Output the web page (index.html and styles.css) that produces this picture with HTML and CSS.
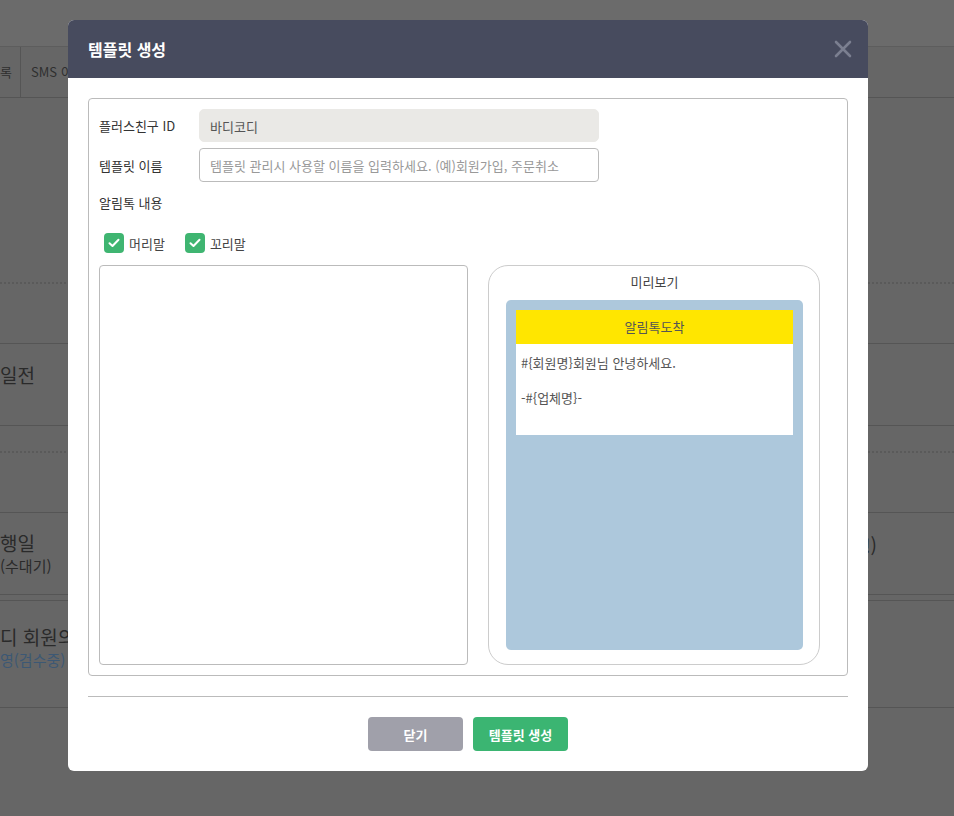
FILE: index.html
```html
<!DOCTYPE html>
<html lang="ko">
<head>
    <meta charset="UTF-8">
    <meta name="viewport" content="width=device-width, initial-scale=1.0">
    <title>알림톡 템플릿</title>
    <link rel="stylesheet" href="styles.css">
</head>
<body>
    <!-- page behind the dialog -->
    <div class="page">
        <div class="topbar"></div>
        <div class="tabs">
            <div class="tab tab-cut">록</div>
            <div class="tab">SMS 이력</div>
        </div>
        <div class="row row-empty dashed"></div>
        <div class="row row-gap"></div>
        <div class="row row-item row-top">
            <div class="cell-title">일전</div>
        </div>
        <div class="row row-thin dashed"></div>
        <div class="row row-gap"></div>
        <div class="row row-item">
            <div class="cell-title">행일<span class="sub">(수대기)</span></div>
            <div class="cell-right">!)</div>
        </div>
        <div class="row row-line"></div>
        <div class="row row-item row-tall">
            <div class="cell-title cell-wide">디 회원의<span class="sub blue">영(검수중)</span></div>
        </div>
    </div>

    <div class="dim">
        <div class="modal">
            <div class="modal-head">
                <h2>템플릿 생성</h2>
                <span class="close"><svg width="18" height="18" viewBox="0 0 18 18"><path d="M2 2 16 16M16 2 2 16" stroke="#7b7f90" stroke-width="2.6" stroke-linecap="round"/></svg></span>
            </div>
            <div class="modal-body">
                <div class="box">
                    <div class="field">
                        <label>플러스친구 ID</label>
                        <div class="input readonly">바디코디</div>
                    </div>
                    <div class="field">
                        <label>템플릿 이름</label>
                        <input class="input" type="text" placeholder="템플릿 관리시 사용할 이름을 입력하세요. (예)회원가입, 주문취소">
                    </div>
                    <div class="field field-text">
                        <label>알림톡 내용</label>
                    </div>
                    <div class="checks">
                        <span class="check">
                            <span class="tick"><svg width="12" height="10" viewBox="0 0 12 10"><path d="M1.5 5.2 4.5 8 10.5 1.8" fill="none" stroke="#fff" stroke-width="2" stroke-linecap="round" stroke-linejoin="round"/></svg></span>머리말
                        </span>
                        <span class="check">
                            <span class="tick"><svg width="12" height="10" viewBox="0 0 12 10"><path d="M1.5 5.2 4.5 8 10.5 1.8" fill="none" stroke="#fff" stroke-width="2" stroke-linecap="round" stroke-linejoin="round"/></svg></span>꼬리말
                        </span>
                    </div>
                    <div class="editor">
                        <textarea class="content"></textarea>
                        <div class="preview">
                            <div class="preview-title">미리보기</div>
                            <div class="phone">
                                <div class="bubble">
                                    <div class="bubble-head">알림톡도착</div>
                                    <div class="bubble-text">#{회원명}회원님 안녕하세요.<br><br>-#{업체명}-</div>
                                </div>
                            </div>
                        </div>
                    </div>
                </div>
                <div class="modal-foot">
                    <button class="btn btn-gray">닫기</button>
                    <button class="btn btn-green">템플릿 생성</button>
                </div>
            </div>
        </div>
    </div>
</body>
</html>
```

FILE: styles.css
```css
html, body{
    margin: 0;
    height: 100%;
    overflow: hidden;
}
body{
    font-family: "Noto Sans CJK KR", "Noto Sans", sans-serif;
    font-size: 13px;
    color: #333;
    background: #666;
}

/* page under the overlay (already dimmed colours) */
.page{
    color: #2a2a2a;
}
.topbar{
    height: 46px;
    background: #6b6b6b;
    border-bottom: 1px solid #5d5d5d;
}
.tabs{
    display: flex;
    height: 50px;
    border-bottom: 1px solid #555;
}
.tab{
    padding: 0 10px;
    line-height: 50px;
    font-size: 13px;
    border-right: 1px solid #555;
    color: #2f2f2f;
}
.tab-cut{
    padding: 0 8px 0 0;
}
.row{
    display: flex;
    border-bottom: 1px solid #555;
}
.row.dashed{
    border-bottom: 2px dotted #5a5a5a;
}
.row-empty{ height: 184px; }
.row-gap{ height: 59px; }
.row-thin{ height: 25px; }
.row-item{
    height: 81px;
    align-items: center;
    justify-content: space-between;
}
.row-top{ align-items: flex-start; }
.row-top .cell-title{ margin-top: 19px; }
.row-line{ height: 5px; }
.row-tall{ height: 106px; align-items: flex-start; }
.cell-title{
    font-size: 19px;
    line-height: 24px;
    display: flex;
    flex-direction: column;
}
.row-tall .cell-title{ margin-top: 24px; }
.sub{
    font-size: 15px;
    line-height: 22px;
}
.blue{ color: #3c5874; }
.cell-right{
    font-size: 19px;
    align-self: flex-start;
    margin: 18px 77px 0 0;
}

/* dialog */
.dim{
    position: fixed;
    inset: 0;
    padding: 20px 0 0 68px;
}
.modal{
    width: 800px;
    background: #fff;
    border-radius: 6px;
    overflow: hidden;
}
.modal-head{
    height: 58px;
    background: #474b5e;
    display: flex;
    align-items: center;
    justify-content: space-between;
    padding: 0 16px 0 20px;
}
.modal-head h2{
    margin: 0;
    font-size: 16px;
    font-weight: bold;
    color: #fff;
}
.close{
    display: flex;
    width: 18px;
    height: 18px;
}
.modal-body{
    padding: 20px;
}
.box{
    border: 1px solid #bbb;
    border-radius: 4px;
    padding: 10px 10px 10px 10px;
}
.field{
    display: flex;
    align-items: center;
    margin-bottom: 6px;
}
.field label{
    width: 100px;
    color: #333;
}
.input{
    box-sizing: border-box;
    width: 400px;
    height: 34px;
    padding: 0 10px;
    border: 1px solid #bbb;
    border-radius: 4px;
    font: inherit;
    color: #555;
    outline: none;
}
.input::placeholder{ color: #999; }
.readonly{
    height: 33px;
    line-height: 33px;
    background: #eae9e6;
    border-color: #eae9e6;
    border-radius: 5px;
}
.field-text{ height: 28px; }
.checks{
    display: flex;
    gap: 20px;
    margin: 17px 0 12px 5px;
}
.check{
    display: flex;
    align-items: center;
    gap: 5px;
    color: #444;
    height: 20px;
}
.tick{
    width: 20px;
    height: 20px;
    border-radius: 4px;
    background: #3fb571;
    display: flex;
    align-items: center;
    justify-content: center;
}
.editor{
    display: flex;
    gap: 20px;
}
.content{
    box-sizing: border-box;
    width: 369px;
    height: 400px;
    border: 1px solid #bbb;
    border-radius: 4px;
    resize: none;
    margin: 0;
}
.preview{
    box-sizing: border-box;
    width: 332px;
    height: 400px;
    border: 1px solid #ccc;
    border-radius: 20px;
    padding: 0 16px 14px 17px;
    display: flex;
    flex-direction: column;
}
.preview-title{
    text-align: center;
    line-height: 18px;
    padding: 7px 0 9px;
    color: #444;
}
.phone{
    flex: 1;
    background: #adc8dc;
    border-radius: 5px;
    padding: 10px;
}
.bubble{
    background: #fff;
}
.bubble-head{
    height: 34px;
    line-height: 34px;
    background: #ffe600;
    text-align: center;
    color: #555;
}
.bubble-text{
    height: 91px;
    box-sizing: border-box;
    padding: 10px 5px 0;
    line-height: 17.5px;
    color: #555;
}
.modal-foot{
    margin-top: 20px;
    border-top: 1px solid #bbb;
    padding-top: 20px;
    display: flex;
    justify-content: center;
    gap: 10px;
}
.btn{
    width: 95px;
    height: 34px;
    border: none;
    border-radius: 4px;
    font: inherit;
    font-weight: bold;
    color: #fff;
}
.btn-gray{ background: #a0a0aa; }
.btn-green{ background: #3bb572; }
```
